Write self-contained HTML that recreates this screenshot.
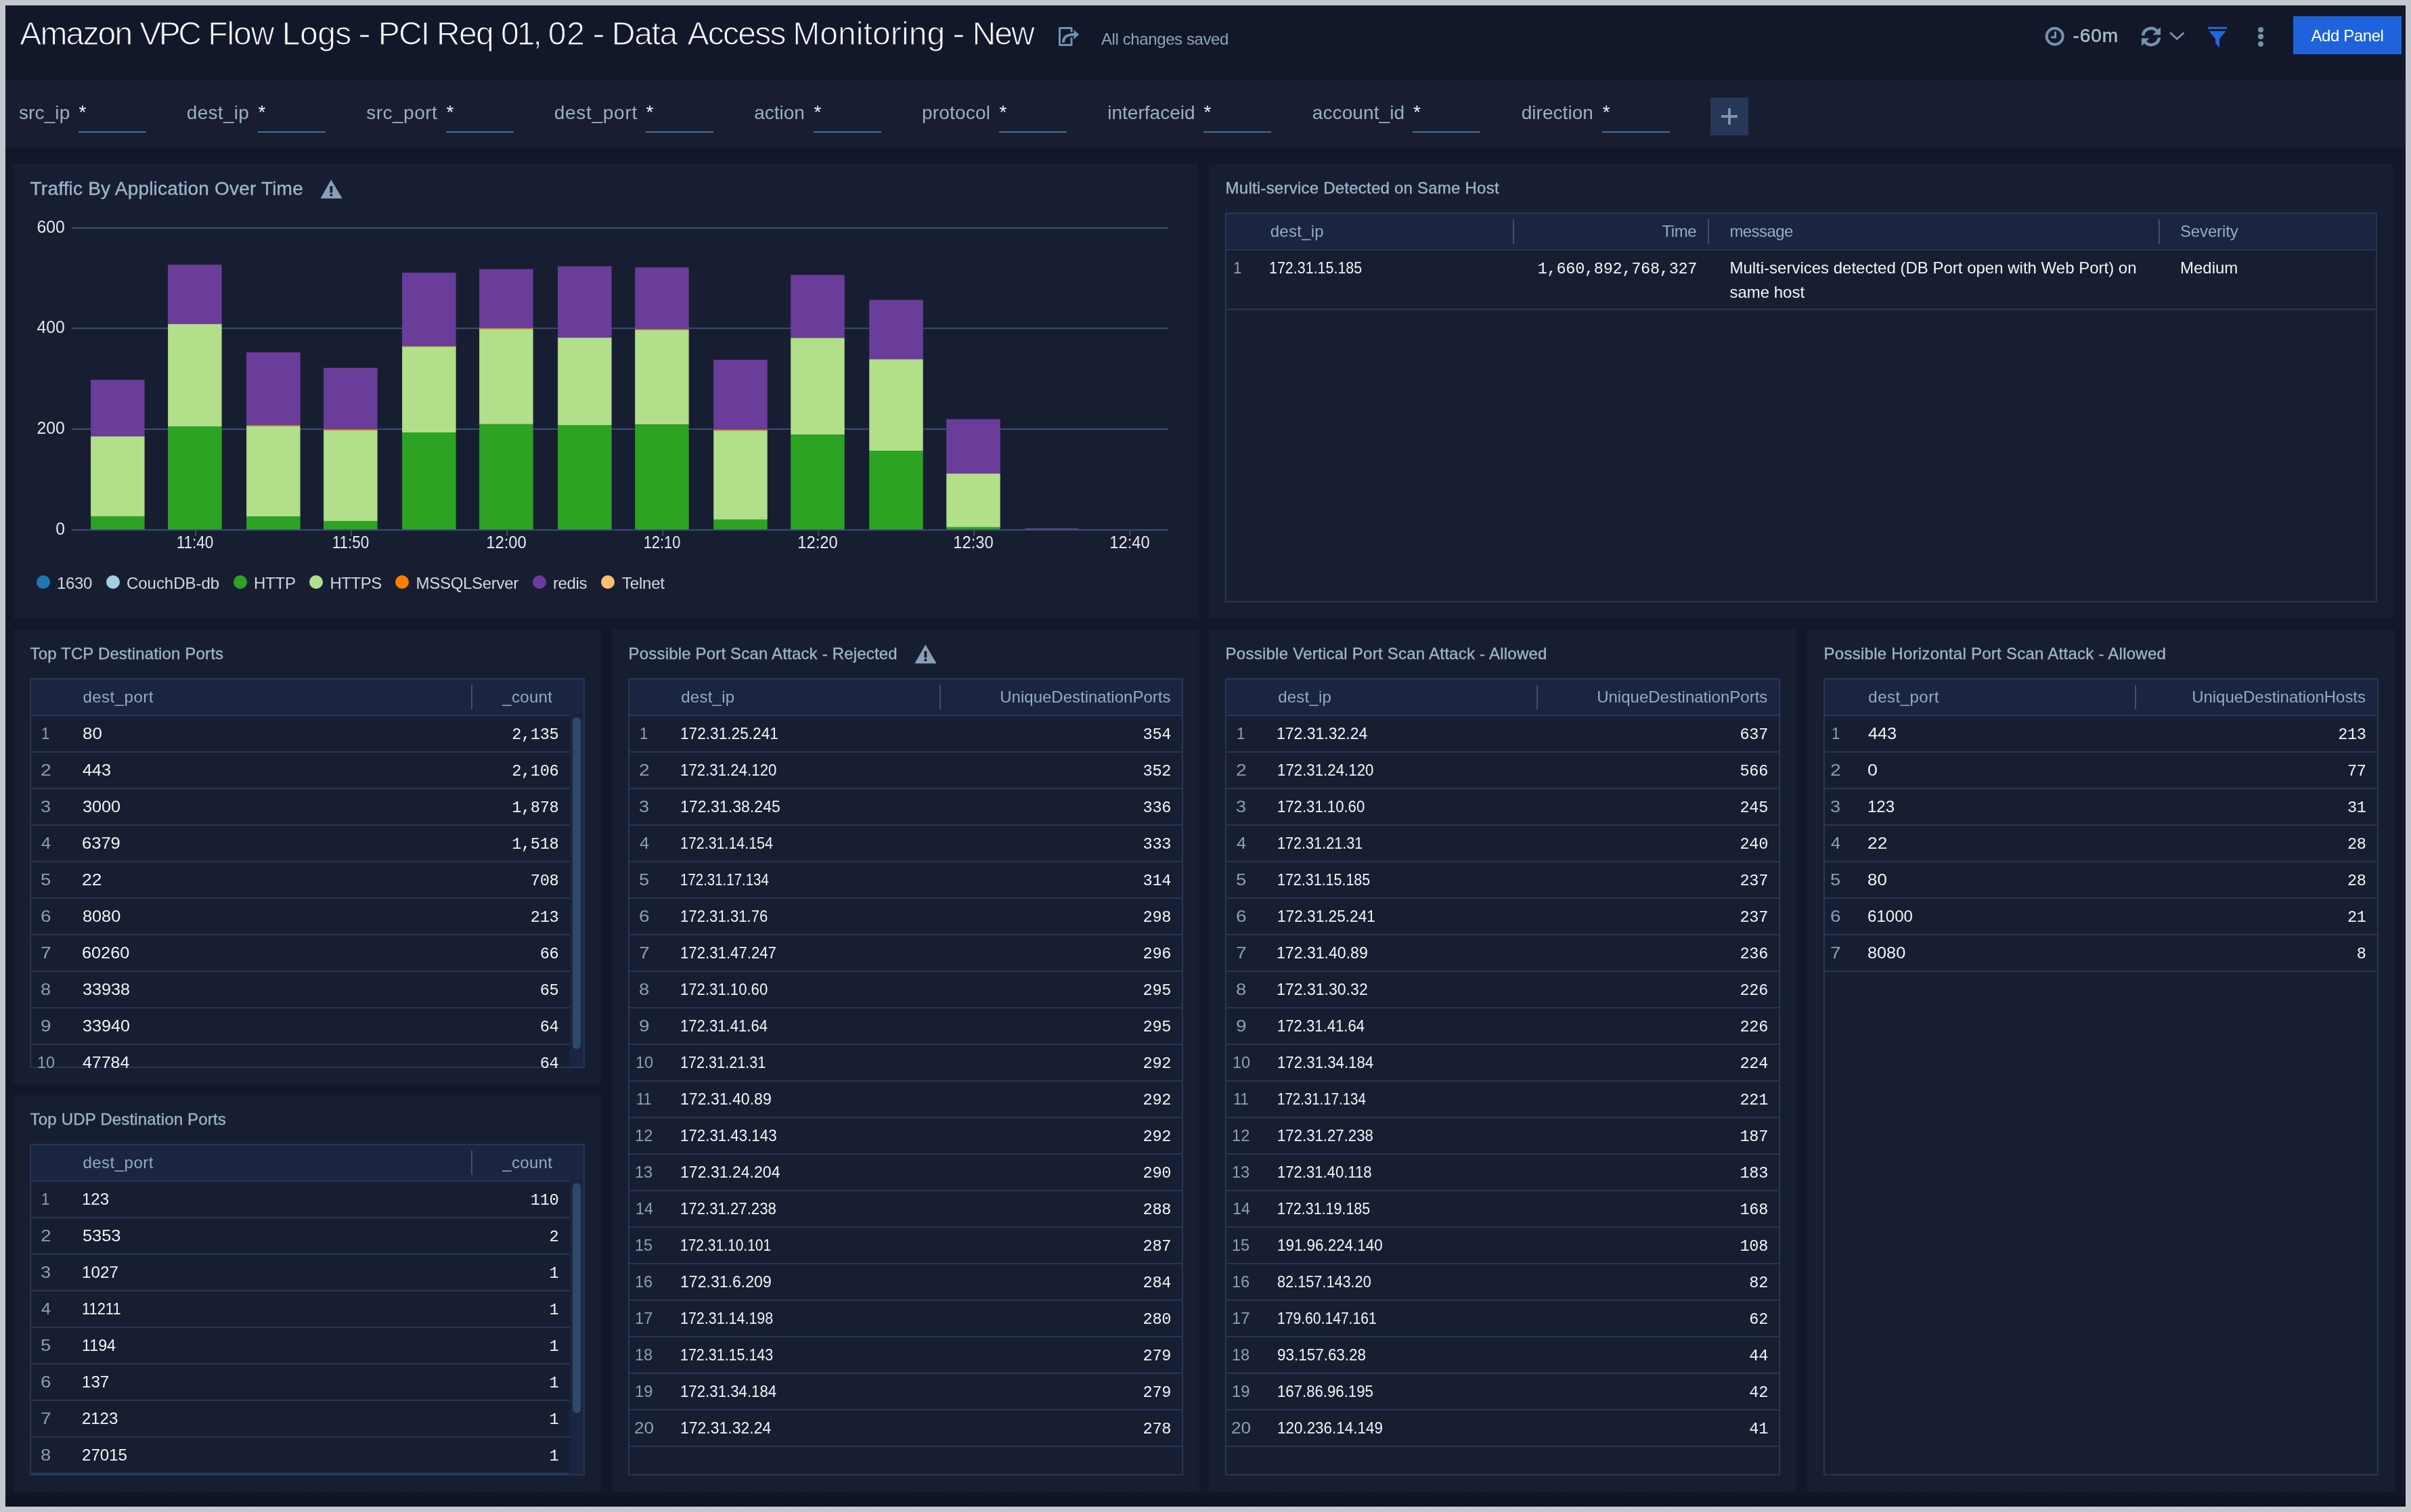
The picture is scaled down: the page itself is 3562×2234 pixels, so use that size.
<!DOCTYPE html>
<html lang="en"><head><meta charset="utf-8">
<title>Amazon VPC Flow Logs - PCI Req 01, 02 - Data Access Monitoring - New</title>
<style>
html,body{margin:0;padding:0;}
body{width:3562px;height:2234px;background:#c4c8cc;overflow:hidden;font-family:"Liberation Sans",Arial,Helvetica,sans-serif;}
#page{position:relative;width:3562px;height:2234px;overflow:hidden;will-change:transform;}
#app{position:absolute;left:8px;top:8px;width:3546px;height:2217.5px;background:#121829;}
.b{position:absolute;}
.t{position:absolute;white-space:nowrap;font-family:"Liberation Sans",Arial,Helvetica,sans-serif;}
.m{font-family:"Liberation Mono","DejaVu Sans Mono",monospace;}
svg{position:absolute;overflow:visible;}
.tbl{position:absolute;box-sizing:border-box;border:2px solid #243759;overflow:hidden;}
</style></head><body><div id="page"><div id="app"></div>

<h1 class="t" style="left:0;top:0;margin:0;font-weight:400;font-size:48px;line-height:48px;color:#f7f9fb;-webkit-text-stroke:1.1px #121829;">
<span style="position:absolute;left:29.20px;top:25.67px;letter-spacing:-1.828px;white-space:pre;">Amazon </span>
<span style="position:absolute;left:206.16px;top:25.67px;letter-spacing:-3.460px;white-space:pre;">VPC </span>
<span style="position:absolute;left:307.36px;top:25.67px;letter-spacing:-1.127px;white-space:pre;">Flow </span>
<span style="position:absolute;left:416.86px;top:25.67px;letter-spacing:-0.547px;white-space:pre;">Logs </span>
<span style="position:absolute;left:529.33px;top:25.67px;transform:scaleX(1.190);transform-origin:left center;white-space:pre;">- </span>
<span style="position:absolute;left:558.66px;top:25.67px;letter-spacing:-1.780px;white-space:pre;">PCI </span>
<span style="position:absolute;left:644.96px;top:25.67px;letter-spacing:-1.680px;white-space:pre;">Req </span>
<span style="position:absolute;left:740.02px;top:25.67px;letter-spacing:-2.960px;white-space:pre;">01, </span>
<span style="position:absolute;left:809.85px;top:25.67px;letter-spacing:0.800px;white-space:pre;">02 </span>
<span style="position:absolute;left:874.63px;top:25.67px;transform:scaleX(1.190);transform-origin:left center;white-space:pre;">- </span>
<span style="position:absolute;left:903.86px;top:25.67px;letter-spacing:-1.327px;white-space:pre;">Data </span>
<span style="position:absolute;left:1015.50px;top:25.67px;letter-spacing:-1.724px;white-space:pre;">Access </span>
<span style="position:absolute;left:1171.16px;top:25.67px;letter-spacing:0.096px;white-space:pre;">Monitoring </span>
<span style="position:absolute;left:1407.35px;top:25.67px;transform:scaleX(1.182);transform-origin:left center;white-space:pre;">- </span>
<span style="position:absolute;left:1436.56px;top:25.67px;letter-spacing:-1.900px;white-space:pre;">New </span>
</h1>
<svg style="left:1562px;top:38px" width="36" height="32" viewBox="0 0 36 32">
<path d="M21 9.5V3.5H3.5V28.5H21V17.5" fill="none" stroke="#6e92b2" stroke-width="3" stroke-linejoin="round"/>
<path d="M9 25C9 16.5 14 13 25 13" fill="none" stroke="#6e92b2" stroke-width="4"/>
<path d="M24.5 6L32.3 13L24.5 20Z" fill="#6e92b2"/></svg>
<div class="t" style="top:45.68px;font-size:24px;line-height:24px;color:#8da4bc;letter-spacing:-0.399px;left:1627.00px;">All changes saved</div>
<svg style="left:3020px;top:38px" width="32" height="32" viewBox="0 0 32 32">
<circle cx="15.7" cy="15.7" r="12" fill="none" stroke="#7592aa" stroke-width="4"/>
<path d="M16.5 8.5V17H10" fill="none" stroke="#7592aa" stroke-width="3"/></svg>
<div class="t" style="top:39.40px;font-size:28px;line-height:28px;color:#a9bccb;letter-spacing:0.902px;left:3062.60px;-webkit-text-stroke:0.5px #a9bccb;">-60m</div>
<svg style="left:3162px;top:38px" width="32" height="32" viewBox="0 0 32 32">
<path d="M4 14.5A12 12 0 0 1 25 8" fill="none" stroke="#7592aa" stroke-width="4.6"/>
<path d="M28 17.5A12 12 0 0 1 7 24" fill="none" stroke="#7592aa" stroke-width="4.6"/>
<path d="M30 2V13.6H18.4Z" fill="#7592aa"/><path d="M2 30V18.4H13.6Z" fill="#7592aa"/></svg>
<svg style="left:3204px;top:45.2px" width="26" height="16" viewBox="0 0 26 16">
<path d="M3 4L12.3 12.5L21.6 4" fill="none" stroke="#7592aa" stroke-width="3" stroke-linecap="round"/></svg>
<svg style="left:3260px;top:38px" width="32" height="34" viewBox="0 0 32 34">
<rect x="2" y="1.8" width="28" height="3" fill="#2166dd"/>
<path d="M3.6 8H28.6L19 19.6V32.2L13 26V19.6Z" fill="#2166dd"/></svg>
<div class="b" style="left:3335.80px;top:40.30px;width:8.00px;height:8.00px;background:#7592aa;border-radius:50%;"></div>
<div class="b" style="left:3335.80px;top:50.40px;width:8.00px;height:8.00px;background:#7592aa;border-radius:50%;"></div>
<div class="b" style="left:3335.80px;top:60.60px;width:8.00px;height:8.00px;background:#7592aa;border-radius:50%;"></div>
<div class="b" style="left:3388.00px;top:24.00px;width:160.00px;height:56.00px;background:#1f63dc;"></div>
<div class="t" style="top:40.68px;font-size:24px;line-height:24px;color:#ffffff;letter-spacing:-0.417px;left:3414.50px;">Add Panel</div>
<div class="b" style="left:8.00px;top:118.00px;width:3546.00px;height:100.00px;background:#181d31;"></div>
<div class="t" style="top:153.30px;font-size:28px;line-height:28px;color:#98afc8;letter-spacing:0.118px;left:28.00px;">src_ip</div>
<div class="t" style="top:151.70px;font-size:28px;line-height:28px;color:#eef2f6;left:116.60px;">*</div>
<div class="b" style="left:116.10px;top:194.00px;width:100.00px;height:2.00px;background:#41729c;"></div>
<div class="t" style="top:153.30px;font-size:28px;line-height:28px;color:#98afc8;letter-spacing:0.301px;left:275.80px;">dest_ip</div>
<div class="t" style="top:151.70px;font-size:28px;line-height:28px;color:#eef2f6;left:381.40px;">*</div>
<div class="b" style="left:380.90px;top:194.00px;width:100.00px;height:2.00px;background:#41729c;"></div>
<div class="t" style="top:153.30px;font-size:28px;line-height:28px;color:#98afc8;letter-spacing:0.494px;left:541.20px;">src_port</div>
<div class="t" style="top:151.70px;font-size:28px;line-height:28px;color:#eef2f6;left:659.60px;">*</div>
<div class="b" style="left:659.10px;top:194.00px;width:100.00px;height:2.00px;background:#41729c;"></div>
<div class="t" style="top:153.30px;font-size:28px;line-height:28px;color:#98afc8;letter-spacing:0.706px;left:818.80px;">dest_port</div>
<div class="t" style="top:151.70px;font-size:28px;line-height:28px;color:#eef2f6;left:954.60px;">*</div>
<div class="b" style="left:954.10px;top:194.00px;width:100.00px;height:2.00px;background:#41729c;"></div>
<div class="t" style="top:153.30px;font-size:28px;line-height:28px;color:#98afc8;letter-spacing:-0.053px;left:1114.30px;">action</div>
<div class="t" style="top:151.70px;font-size:28px;line-height:28px;color:#eef2f6;left:1202.50px;">*</div>
<div class="b" style="left:1202.00px;top:194.00px;width:100.00px;height:2.00px;background:#41729c;"></div>
<div class="t" style="top:153.30px;font-size:28px;line-height:28px;color:#98afc8;letter-spacing:0.186px;left:1362.10px;">protocol</div>
<div class="t" style="top:151.70px;font-size:28px;line-height:28px;color:#eef2f6;left:1476.40px;">*</div>
<div class="b" style="left:1475.90px;top:194.00px;width:100.00px;height:2.00px;background:#41729c;"></div>
<div class="t" style="top:153.30px;font-size:28px;line-height:28px;color:#98afc8;letter-spacing:0.029px;left:1636.20px;">interfaceid</div>
<div class="t" style="top:151.70px;font-size:28px;line-height:28px;color:#eef2f6;left:1778.40px;">*</div>
<div class="b" style="left:1777.90px;top:194.00px;width:100.00px;height:2.00px;background:#41729c;"></div>
<div class="t" style="top:153.30px;font-size:28px;line-height:28px;color:#98afc8;letter-spacing:0.097px;left:1938.80px;">account_id</div>
<div class="t" style="top:151.70px;font-size:28px;line-height:28px;color:#eef2f6;left:2087.90px;">*</div>
<div class="b" style="left:2087.40px;top:194.00px;width:100.00px;height:2.00px;background:#41729c;"></div>
<div class="t" style="top:153.30px;font-size:28px;line-height:28px;color:#98afc8;letter-spacing:0.041px;left:2247.70px;">direction</div>
<div class="t" style="top:151.70px;font-size:28px;line-height:28px;color:#eef2f6;left:2367.80px;">*</div>
<div class="b" style="left:2367.30px;top:194.00px;width:100.00px;height:2.00px;background:#41729c;"></div>
<div class="b" style="left:2527.00px;top:144.00px;width:56.00px;height:56.00px;background:#263758;"></div>
<div class="b" style="left:2543.00px;top:170.00px;width:24.00px;height:4.00px;background:#7894b0;"></div>
<div class="b" style="left:2553.00px;top:160.00px;width:4.00px;height:24.00px;background:#7894b0;"></div>
<div class="b" style="left:20.00px;top:242.00px;width:1750.00px;height:672.00px;background:#181e31;"></div>
<div class="t" style="top:264.90px;font-size:28px;line-height:28px;color:#9db4cd;letter-spacing:0.203px;left:44.60px;-webkit-text-stroke:0.35px #9db4cd;">Traffic By Application Over Time</div>
<svg style="left:472.6px;top:265.0px" width="34" height="30" viewBox="0 0 34 30">
<path d="M16.3 0.5L32.6 28.2H0.4Z" fill="#8a9eb8"/>
<rect x="14.4" y="10" width="3.9" height="9.6" fill="#181e31"/><rect x="14.4" y="21.2" width="3.9" height="3.8" rx="1.6" fill="#181e31"/></svg>
<svg style="left:0;top:0" width="3562" height="2234" viewBox="0 0 3562 2234">
<rect x="106" y="336" width="1620" height="2" fill="#364e73"/>
<rect x="106" y="484" width="1620" height="2" fill="#364e73"/>
<rect x="106" y="633" width="1620" height="2" fill="#364e73"/>
<rect x="134.1" y="561.2" width="79.5" height="83.60" fill="#6a3d9a"/>
<rect x="134.1" y="644.8" width="79.5" height="118.10" fill="#b2df8a"/>
<rect x="134.1" y="762.9" width="79.5" height="19.10" fill="#2da323"/>
<rect x="248.1" y="391.0" width="79.5" height="87.80" fill="#6a3d9a"/>
<rect x="248.1" y="478.8" width="79.5" height="151.30" fill="#b2df8a"/>
<rect x="248.1" y="630.1" width="79.5" height="151.90" fill="#2da323"/>
<rect x="364.1" y="520.6" width="79.5" height="107.70" fill="#6a3d9a"/>
<rect x="364.1" y="628.3" width="79.5" height="1.00" fill="#ff7f00"/>
<rect x="364.1" y="629.3" width="79.5" height="134.00" fill="#b2df8a"/>
<rect x="364.1" y="763.3" width="79.5" height="18.70" fill="#2da323"/>
<rect x="478.1" y="543.6" width="79.5" height="90.60" fill="#6a3d9a"/>
<rect x="478.1" y="634.2" width="79.5" height="1.60" fill="#ff7f00"/>
<rect x="478.1" y="635.8" width="79.5" height="134.10" fill="#b2df8a"/>
<rect x="478.1" y="769.9" width="79.5" height="12.10" fill="#2da323"/>
<rect x="594.1" y="402.9" width="79.5" height="108.50" fill="#6a3d9a"/>
<rect x="594.1" y="511.4" width="79.5" height="0.80" fill="#ff7f00"/>
<rect x="594.1" y="512.2" width="79.5" height="126.90" fill="#b2df8a"/>
<rect x="594.1" y="639.1" width="79.5" height="142.90" fill="#2da323"/>
<rect x="708.1" y="397.6" width="79.5" height="87.30" fill="#6a3d9a"/>
<rect x="708.1" y="484.9" width="79.5" height="1.30" fill="#ff7f00"/>
<rect x="708.1" y="486.2" width="79.5" height="140.60" fill="#b2df8a"/>
<rect x="708.1" y="626.8" width="79.5" height="155.20" fill="#2da323"/>
<rect x="824.1" y="393.5" width="79.5" height="105.40" fill="#6a3d9a"/>
<rect x="824.1" y="498.9" width="79.5" height="129.10" fill="#b2df8a"/>
<rect x="824.1" y="628.0" width="79.5" height="154.00" fill="#2da323"/>
<rect x="938.2" y="395.1" width="79.5" height="91.30" fill="#6a3d9a"/>
<rect x="938.2" y="486.4" width="79.5" height="0.80" fill="#ff7f00"/>
<rect x="938.2" y="487.2" width="79.5" height="140.00" fill="#b2df8a"/>
<rect x="938.2" y="627.2" width="79.5" height="154.80" fill="#2da323"/>
<rect x="1054.2" y="531.6" width="79.5" height="103.20" fill="#6a3d9a"/>
<rect x="1054.2" y="634.8" width="79.5" height="1.40" fill="#ff7f00"/>
<rect x="1054.2" y="636.2" width="79.5" height="131.60" fill="#b2df8a"/>
<rect x="1054.2" y="767.8" width="79.5" height="14.20" fill="#2da323"/>
<rect x="1168.2" y="406.2" width="79.5" height="93.10" fill="#6a3d9a"/>
<rect x="1168.2" y="499.3" width="79.5" height="143.00" fill="#b2df8a"/>
<rect x="1168.2" y="642.3" width="79.5" height="139.70" fill="#2da323"/>
<rect x="1284.2" y="443.1" width="79.5" height="87.70" fill="#6a3d9a"/>
<rect x="1284.2" y="530.8" width="79.5" height="135.30" fill="#b2df8a"/>
<rect x="1284.2" y="666.1" width="79.5" height="115.90" fill="#2da323"/>
<rect x="1398.2" y="619.4" width="79.5" height="80.30" fill="#6a3d9a"/>
<rect x="1398.2" y="699.7" width="79.5" height="79.20" fill="#b2df8a"/>
<rect x="1398.2" y="778.9" width="79.5" height="3.10" fill="#2da323"/>
<rect x="1514.2" y="780.6" width="79.5" height="1.40" fill="#6a3d9a"/>
<rect x="106" y="782" width="1620" height="2" fill="#364e73"/>
<rect x="288.0" y="784" width="2" height="8" fill="#364e73"/>
<rect x="518.0" y="784" width="2" height="8" fill="#364e73"/>
<rect x="748.1" y="784" width="2" height="8" fill="#364e73"/>
<rect x="978.2" y="784" width="2" height="8" fill="#364e73"/>
<rect x="1208.2" y="784" width="2" height="8" fill="#364e73"/>
<rect x="1438.2" y="784" width="2" height="8" fill="#364e73"/>
<rect x="1668.3" y="784" width="2" height="8" fill="#364e73"/>
</svg>
<div class="t" style="top:322.84px;font-size:25px;line-height:25px;color:#e3e8ee;transform:scaleX(0.9889);transform-origin:right center;right:3466.60px;text-align:right;">600</div>
<div class="t" style="top:470.84px;font-size:25px;line-height:25px;color:#e3e8ee;transform:scaleX(0.9889);transform-origin:right center;right:3466.60px;text-align:right;">400</div>
<div class="t" style="top:619.84px;font-size:25px;line-height:25px;color:#e3e8ee;transform:scaleX(0.9889);transform-origin:right center;right:3466.60px;text-align:right;">200</div>
<div class="t" style="top:768.84px;font-size:25px;line-height:25px;color:#e3e8ee;transform:scaleX(0.9889);transform-origin:right center;right:3466.60px;text-align:right;">0</div>
<div class="t" style="top:789.34px;font-size:25px;line-height:25px;color:#e3e8ee;transform:scaleX(0.9011);transform-origin:center center;left:-211.80px;width:1000px;text-align:center;">11:40</div>
<div class="t" style="top:789.34px;font-size:25px;line-height:25px;color:#e3e8ee;transform:scaleX(0.9011);transform-origin:center center;left:18.25px;width:1000px;text-align:center;">11:50</div>
<div class="t" style="top:789.34px;font-size:25px;line-height:25px;color:#e3e8ee;transform:scaleX(0.9479);transform-origin:center center;left:248.30px;width:1000px;text-align:center;">12:00</div>
<div class="t" style="top:789.34px;font-size:25px;line-height:25px;color:#e3e8ee;transform:scaleX(0.8743);transform-origin:center center;left:478.35px;width:1000px;text-align:center;">12:10</div>
<div class="t" style="top:789.34px;font-size:25px;line-height:25px;color:#e3e8ee;transform:scaleX(0.9479);transform-origin:center center;left:708.40px;width:1000px;text-align:center;">12:20</div>
<div class="t" style="top:789.34px;font-size:25px;line-height:25px;color:#e3e8ee;transform:scaleX(0.9479);transform-origin:center center;left:938.45px;width:1000px;text-align:center;">12:30</div>
<div class="t" style="top:789.34px;font-size:25px;line-height:25px;color:#e3e8ee;transform:scaleX(0.9479);transform-origin:center center;left:1168.50px;width:1000px;text-align:center;">12:40</div>
<div class="b" style="left:54.00px;top:850.00px;width:20.00px;height:20.00px;background:#1f78b4;border-radius:50%;"></div>
<div class="t" style="top:850.38px;font-size:24px;line-height:24px;color:#d0d8e0;letter-spacing:-0.348px;left:84.00px;">1630</div>
<div class="b" style="left:156.90px;top:850.00px;width:20.00px;height:20.00px;background:#a6cee3;border-radius:50%;"></div>
<div class="t" style="top:850.38px;font-size:24px;line-height:24px;color:#d0d8e0;letter-spacing:-0.040px;left:187.00px;">CouchDB-db</div>
<div class="b" style="left:345.00px;top:850.00px;width:20.00px;height:20.00px;background:#2da323;border-radius:50%;"></div>
<div class="t" style="top:850.38px;font-size:24px;line-height:24px;color:#d0d8e0;letter-spacing:-0.240px;left:375.00px;">HTTP</div>
<div class="b" style="left:457.40px;top:850.00px;width:20.00px;height:20.00px;background:#b2df8a;border-radius:50%;"></div>
<div class="t" style="top:850.38px;font-size:24px;line-height:24px;color:#d0d8e0;letter-spacing:-0.474px;left:487.50px;">HTTPS</div>
<div class="b" style="left:584.00px;top:850.00px;width:20.00px;height:20.00px;background:#ff7f00;border-radius:50%;"></div>
<div class="t" style="top:850.38px;font-size:24px;line-height:24px;color:#d0d8e0;letter-spacing:-0.301px;left:614.60px;">MSSQLServer</div>
<div class="b" style="left:787.00px;top:850.00px;width:20.00px;height:20.00px;background:#6a3d9a;border-radius:50%;"></div>
<div class="t" style="top:850.38px;font-size:24px;line-height:24px;color:#d0d8e0;letter-spacing:-0.404px;left:817.00px;">redis</div>
<div class="b" style="left:888.00px;top:850.00px;width:20.00px;height:20.00px;background:#fdbf6f;border-radius:50%;"></div>
<div class="t" style="top:850.38px;font-size:24px;line-height:24px;color:#d0d8e0;letter-spacing:-0.224px;left:919.00px;">Telnet</div>
<div class="b" style="left:1786.00px;top:242.00px;width:1750.00px;height:672.00px;background:#181e31;"></div>
<div class="t" style="top:266.18px;font-size:24px;line-height:24px;color:#9db4cd;letter-spacing:0.230px;left:1810.60px;-webkit-text-stroke:0.35px #9db4cd;">Multi-service Detected on Same Host</div>
<div class="tbl" style="left:1810.00px;top:314.00px;width:1702.00px;height:576.00px;"></div>
<div class="b" style="left:1812.00px;top:316.00px;width:1698.00px;height:52.00px;background:#1b2540;"></div>
<div class="b" style="left:1812.00px;top:368.00px;width:1698.00px;height:2.00px;background:#243759;"></div>
<div class="b" style="left:2234.90px;top:323.50px;width:2.00px;height:36.00px;background:#3a5273;"></div>
<div class="b" style="left:2523.00px;top:323.50px;width:2.00px;height:36.00px;background:#3a5273;"></div>
<div class="b" style="left:3189.00px;top:323.50px;width:2.00px;height:36.00px;background:#3a5273;"></div>
<div class="t" style="top:329.88px;font-size:24px;line-height:24px;color:#92abc6;letter-spacing:0.230px;left:1876.80px;">dest_ip</div>
<div class="t" style="top:329.88px;font-size:24px;line-height:24px;color:#92abc6;letter-spacing:-0.510px;right:1056.01px;text-align:right;">Time</div>
<div class="t" style="top:329.88px;font-size:24px;line-height:24px;color:#92abc6;letter-spacing:-0.583px;left:2555.40px;">message</div>
<div class="t" style="top:329.88px;font-size:24px;line-height:24px;color:#92abc6;letter-spacing:-0.149px;left:3221.00px;">Severity</div>
<div class="b" style="left:1812.00px;top:456.00px;width:1698.00px;height:2.00px;background:#243759;"></div>
<div class="t" style="left:1821.62px;top:383.56px;font-size:24.5px;line-height:24.5px;color:#8aa0ba;transform:scaleX(0.9064);transform-origin:left center;">1</div>
<div class="t" style="left:1875.19px;top:383.56px;font-size:24.5px;line-height:24.5px;color:#f1f4f7;transform:scaleX(0.8758);transform-origin:left center;">172.31.15.185</div>
<div class="t m" style="top:386.21px;font-size:23.6px;line-height:23.6px;color:#f1f4f7;letter-spacing:-0.310px;right:1054.81px;text-align:right;">1,660,892,768,327</div>
<div class="t" style="top:383.68px;font-size:24px;line-height:24px;color:#f1f4f7;left:2555.40px;">Multi-services detected (DB Port open with Web Port) on</div>
<div class="t" style="top:419.68px;font-size:24px;line-height:24px;color:#f1f4f7;left:2555.40px;">same host</div>
<div class="t" style="top:383.68px;font-size:24px;line-height:24px;color:#f1f4f7;left:3221.00px;">Medium</div>
<div class="b" style="left:20.00px;top:930.00px;width:868.00px;height:672.00px;background:#181e31;"></div>
<div class="t" style="top:954.18px;font-size:24px;line-height:24px;color:#9db4cd;letter-spacing:0.143px;left:44.60px;-webkit-text-stroke:0.35px #9db4cd;">Top TCP Destination Ports</div>
<div class="b" style="left:0;top:0;width:3562px;height:2234px;clip-path:inset(1002.00px 2698.00px 656.00px 44.00px);">
<div class="tbl" style="left:44.00px;top:1002.00px;width:820.00px;height:576.00px;"></div>
<div class="b" style="left:46.00px;top:1004.00px;width:816.00px;height:52.00px;background:#1b2540;"></div>
<div class="b" style="left:46.00px;top:1056.00px;width:796.30px;height:2.00px;background:#243759;"></div>
<div class="b" style="left:842.30px;top:1058.00px;width:19.70px;height:518.00px;background:#1b2540;"></div>
<div class="b" style="left:695.90px;top:1011.50px;width:2.00px;height:36.00px;background:#3a5273;"></div>
<div class="t" style="top:1017.88px;font-size:24px;line-height:24px;color:#92abc6;letter-spacing:0.493px;left:122.40px;">dest_port</div>
<div class="t" style="top:1017.88px;font-size:24px;line-height:24px;color:#92abc6;letter-spacing:0.324px;right:2745.78px;text-align:right;">_count</div>
<div class="b" style="left:46.00px;top:1110.00px;width:796.30px;height:2.00px;background:#243759;"></div>
<div class="t" style="left:61.42px;top:1071.56px;font-size:24.5px;line-height:24.5px;color:#8aa0ba;transform:scaleX(0.9064);transform-origin:left center;">1</div>
<div class="t" style="left:121.57px;top:1071.56px;font-size:24.5px;line-height:24.5px;color:#f1f4f7;transform:scaleX(1.0557);transform-origin:left center;">80</div>
<div class="t m" style="top:1074.21px;font-size:23.6px;line-height:23.6px;color:#f1f4f7;letter-spacing:-0.310px;right:2736.61px;text-align:right;">2,135</div>
<div class="b" style="left:46.00px;top:1164.00px;width:796.30px;height:2.00px;background:#243759;"></div>
<div class="t" style="left:59.75px;top:1125.56px;font-size:24.5px;line-height:24.5px;color:#8aa0ba;transform:scaleX(1.1517);transform-origin:left center;">2</div>
<div class="t" style="left:122.09px;top:1125.56px;font-size:24.5px;line-height:24.5px;color:#f1f4f7;transform:scaleX(1.0315);transform-origin:left center;">443</div>
<div class="t m" style="top:1128.21px;font-size:23.6px;line-height:23.6px;color:#f1f4f7;letter-spacing:-0.310px;right:2736.61px;text-align:right;">2,106</div>
<div class="b" style="left:46.00px;top:1218.00px;width:796.30px;height:2.00px;background:#243759;"></div>
<div class="t" style="left:60.08px;top:1179.56px;font-size:24.5px;line-height:24.5px;color:#8aa0ba;transform:scaleX(1.1037);transform-origin:left center;">3</div>
<div class="t" style="left:121.72px;top:1179.56px;font-size:24.5px;line-height:24.5px;color:#f1f4f7;transform:scaleX(1.0294);transform-origin:left center;">3000</div>
<div class="t m" style="top:1182.21px;font-size:23.6px;line-height:23.6px;color:#f1f4f7;letter-spacing:-0.310px;right:2736.61px;text-align:right;">1,878</div>
<div class="b" style="left:46.00px;top:1272.00px;width:796.30px;height:2.00px;background:#243759;"></div>
<div class="t" style="left:60.52px;top:1233.56px;font-size:24.5px;line-height:24.5px;color:#8aa0ba;transform:scaleX(1.0388);transform-origin:left center;">4</div>
<div class="t" style="left:121.32px;top:1233.56px;font-size:24.5px;line-height:24.5px;color:#f1f4f7;transform:scaleX(1.0415);transform-origin:left center;">6379</div>
<div class="t m" style="top:1236.21px;font-size:23.6px;line-height:23.6px;color:#f1f4f7;letter-spacing:-0.310px;right:2736.61px;text-align:right;">1,518</div>
<div class="b" style="left:46.00px;top:1326.00px;width:796.30px;height:2.00px;background:#243759;"></div>
<div class="t" style="left:60.00px;top:1287.56px;font-size:24.5px;line-height:24.5px;color:#8aa0ba;transform:scaleX(1.1154);transform-origin:left center;">5</div>
<div class="t" style="left:121.28px;top:1287.56px;font-size:24.5px;line-height:24.5px;color:#f1f4f7;transform:scaleX(1.0765);transform-origin:left center;">22</div>
<div class="t m" style="top:1290.21px;font-size:23.6px;line-height:23.6px;color:#f1f4f7;letter-spacing:-0.310px;right:2736.61px;text-align:right;">708</div>
<div class="b" style="left:46.00px;top:1380.00px;width:796.30px;height:2.00px;background:#243759;"></div>
<div class="t" style="left:59.84px;top:1341.56px;font-size:24.5px;line-height:24.5px;color:#8aa0ba;transform:scaleX(1.1393);transform-origin:left center;">6</div>
<div class="t" style="left:121.59px;top:1341.56px;font-size:24.5px;line-height:24.5px;color:#f1f4f7;transform:scaleX(1.0318);transform-origin:left center;">8080</div>
<div class="t m" style="top:1344.21px;font-size:23.6px;line-height:23.6px;color:#f1f4f7;letter-spacing:-0.310px;right:2736.61px;text-align:right;">213</div>
<div class="b" style="left:46.00px;top:1434.00px;width:796.30px;height:2.00px;background:#243759;"></div>
<div class="t" style="left:59.75px;top:1395.56px;font-size:24.5px;line-height:24.5px;color:#8aa0ba;transform:scaleX(1.1517);transform-origin:left center;">7</div>
<div class="t" style="left:121.34px;top:1395.56px;font-size:24.5px;line-height:24.5px;color:#f1f4f7;transform:scaleX(1.0320);transform-origin:left center;">60260</div>
<div class="t m" style="top:1398.21px;font-size:23.6px;line-height:23.6px;color:#f1f4f7;letter-spacing:-0.310px;right:2736.61px;text-align:right;">66</div>
<div class="b" style="left:46.00px;top:1488.00px;width:796.30px;height:2.00px;background:#243759;"></div>
<div class="t" style="left:60.00px;top:1449.56px;font-size:24.5px;line-height:24.5px;color:#8aa0ba;transform:scaleX(1.1154);transform-origin:left center;">8</div>
<div class="t" style="left:121.72px;top:1449.56px;font-size:24.5px;line-height:24.5px;color:#f1f4f7;transform:scaleX(1.0282);transform-origin:left center;">33938</div>
<div class="t m" style="top:1452.21px;font-size:23.6px;line-height:23.6px;color:#f1f4f7;letter-spacing:-0.310px;right:2736.61px;text-align:right;">65</div>
<div class="b" style="left:46.00px;top:1542.00px;width:796.30px;height:2.00px;background:#243759;"></div>
<div class="t" style="left:59.84px;top:1503.56px;font-size:24.5px;line-height:24.5px;color:#8aa0ba;transform:scaleX(1.1393);transform-origin:left center;">9</div>
<div class="t" style="left:121.72px;top:1503.56px;font-size:24.5px;line-height:24.5px;color:#f1f4f7;transform:scaleX(1.0263);transform-origin:left center;">33940</div>
<div class="t m" style="top:1506.21px;font-size:23.6px;line-height:23.6px;color:#f1f4f7;letter-spacing:-0.310px;right:2736.61px;text-align:right;">64</div>
<div class="b" style="left:46.00px;top:1596.00px;width:796.30px;height:2.00px;background:#243759;"></div>
<div class="t" style="left:54.56px;top:1557.56px;font-size:24.5px;line-height:24.5px;color:#8aa0ba;transform:scaleX(0.9571);transform-origin:left center;">10</div>
<div class="t" style="left:122.10px;top:1557.56px;font-size:24.5px;line-height:24.5px;color:#f1f4f7;transform:scaleX(1.0169);transform-origin:left center;">47784</div>
<div class="t m" style="top:1560.21px;font-size:23.6px;line-height:23.6px;color:#f1f4f7;letter-spacing:-0.310px;right:2736.61px;text-align:right;">64</div>
<div class="b" style="left:846.40px;top:1060.00px;width:11.20px;height:490.40px;background:#2d4a6b;border-radius:6px;"></div>
</div>
<div class="b" style="left:20.00px;top:1618.00px;width:868.00px;height:586.00px;background:#181e31;"></div>
<div class="t" style="top:1642.18px;font-size:24px;line-height:24px;color:#9db4cd;letter-spacing:0.171px;left:44.60px;-webkit-text-stroke:0.35px #9db4cd;">Top UDP Destination Ports</div>
<div class="b" style="left:0;top:0;width:3562px;height:2234px;clip-path:inset(1690.00px 2698.00px 54.00px 44.00px);">
<div class="tbl" style="left:44.00px;top:1690.00px;width:820.00px;height:490.00px;"></div>
<div class="b" style="left:46.00px;top:1692.00px;width:816.00px;height:52.00px;background:#1b2540;"></div>
<div class="b" style="left:46.00px;top:1744.00px;width:796.30px;height:2.00px;background:#243759;"></div>
<div class="b" style="left:842.30px;top:1746.00px;width:19.70px;height:432.00px;background:#1b2540;"></div>
<div class="b" style="left:695.90px;top:1699.50px;width:2.00px;height:36.00px;background:#3a5273;"></div>
<div class="t" style="top:1705.88px;font-size:24px;line-height:24px;color:#92abc6;letter-spacing:0.493px;left:122.40px;">dest_port</div>
<div class="t" style="top:1705.88px;font-size:24px;line-height:24px;color:#92abc6;letter-spacing:0.324px;right:2745.78px;text-align:right;">_count</div>
<div class="b" style="left:46.00px;top:1798.00px;width:796.30px;height:2.00px;background:#243759;"></div>
<div class="t" style="left:61.42px;top:1759.56px;font-size:24.5px;line-height:24.5px;color:#8aa0ba;transform:scaleX(0.9064);transform-origin:left center;">1</div>
<div class="t" style="left:120.80px;top:1759.56px;font-size:24.5px;line-height:24.5px;color:#f1f4f7;transform:scaleX(0.9806);transform-origin:left center;">123</div>
<div class="t m" style="top:1762.21px;font-size:23.6px;line-height:23.6px;color:#f1f4f7;letter-spacing:-0.310px;right:2736.61px;text-align:right;">110</div>
<div class="b" style="left:46.00px;top:1852.00px;width:796.30px;height:2.00px;background:#243759;"></div>
<div class="t" style="left:59.75px;top:1813.56px;font-size:24.5px;line-height:24.5px;color:#8aa0ba;transform:scaleX(1.1517);transform-origin:left center;">2</div>
<div class="t" style="left:121.59px;top:1813.56px;font-size:24.5px;line-height:24.5px;color:#f1f4f7;transform:scaleX(1.0342);transform-origin:left center;">5353</div>
<div class="t m" style="top:1816.21px;font-size:23.6px;line-height:23.6px;color:#f1f4f7;letter-spacing:-0.310px;right:2736.61px;text-align:right;">2</div>
<div class="b" style="left:46.00px;top:1906.00px;width:796.30px;height:2.00px;background:#243759;"></div>
<div class="t" style="left:60.08px;top:1867.56px;font-size:24.5px;line-height:24.5px;color:#8aa0ba;transform:scaleX(1.1037);transform-origin:left center;">3</div>
<div class="t" style="left:120.78px;top:1867.56px;font-size:24.5px;line-height:24.5px;color:#f1f4f7;transform:scaleX(0.9895);transform-origin:left center;">1027</div>
<div class="t m" style="top:1870.21px;font-size:23.6px;line-height:23.6px;color:#f1f4f7;letter-spacing:-0.310px;right:2736.61px;text-align:right;">1</div>
<div class="b" style="left:46.00px;top:1960.00px;width:796.30px;height:2.00px;background:#243759;"></div>
<div class="t" style="left:60.52px;top:1921.56px;font-size:24.5px;line-height:24.5px;color:#8aa0ba;transform:scaleX(1.0388);transform-origin:left center;">4</div>
<div class="t" style="left:120.96px;top:1921.56px;font-size:24.5px;line-height:24.5px;color:#f1f4f7;transform:scaleX(0.8921);transform-origin:left center;">11211</div>
<div class="t m" style="top:1924.21px;font-size:23.6px;line-height:23.6px;color:#f1f4f7;letter-spacing:-0.310px;right:2736.61px;text-align:right;">1</div>
<div class="b" style="left:46.00px;top:2014.00px;width:796.30px;height:2.00px;background:#243759;"></div>
<div class="t" style="left:60.00px;top:1975.56px;font-size:24.5px;line-height:24.5px;color:#8aa0ba;transform:scaleX(1.1154);transform-origin:left center;">5</div>
<div class="t" style="left:120.85px;top:1975.56px;font-size:24.5px;line-height:24.5px;color:#f1f4f7;transform:scaleX(0.9499);transform-origin:left center;">1194</div>
<div class="t m" style="top:1978.21px;font-size:23.6px;line-height:23.6px;color:#f1f4f7;letter-spacing:-0.310px;right:2736.61px;text-align:right;">1</div>
<div class="b" style="left:46.00px;top:2068.00px;width:796.30px;height:2.00px;background:#243759;"></div>
<div class="t" style="left:59.84px;top:2029.56px;font-size:24.5px;line-height:24.5px;color:#8aa0ba;transform:scaleX(1.1393);transform-origin:left center;">6</div>
<div class="t" style="left:120.79px;top:2029.56px;font-size:24.5px;line-height:24.5px;color:#f1f4f7;transform:scaleX(0.9838);transform-origin:left center;">137</div>
<div class="t m" style="top:2032.21px;font-size:23.6px;line-height:23.6px;color:#f1f4f7;letter-spacing:-0.310px;right:2736.61px;text-align:right;">1</div>
<div class="b" style="left:46.00px;top:2122.00px;width:796.30px;height:2.00px;background:#243759;"></div>
<div class="t" style="left:59.75px;top:2083.56px;font-size:24.5px;line-height:24.5px;color:#8aa0ba;transform:scaleX(1.1517);transform-origin:left center;">7</div>
<div class="t" style="left:121.40px;top:2083.56px;font-size:24.5px;line-height:24.5px;color:#f1f4f7;transform:scaleX(0.9756);transform-origin:left center;">2123</div>
<div class="t m" style="top:2086.21px;font-size:23.6px;line-height:23.6px;color:#f1f4f7;letter-spacing:-0.310px;right:2736.61px;text-align:right;">1</div>
<div class="b" style="left:46.00px;top:2176.00px;width:796.30px;height:2.00px;background:#243759;"></div>
<div class="t" style="left:60.00px;top:2137.56px;font-size:24.5px;line-height:24.5px;color:#8aa0ba;transform:scaleX(1.1154);transform-origin:left center;">8</div>
<div class="t" style="left:121.40px;top:2137.56px;font-size:24.5px;line-height:24.5px;color:#f1f4f7;transform:scaleX(0.9835);transform-origin:left center;">27015</div>
<div class="t m" style="top:2140.21px;font-size:23.6px;line-height:23.6px;color:#f1f4f7;letter-spacing:-0.310px;right:2736.61px;text-align:right;">1</div>
<div class="b" style="left:846.40px;top:1748.20px;width:11.20px;height:339.80px;background:#2d4a6b;border-radius:6px;"></div>
</div>
<div class="b" style="left:904.00px;top:930.00px;width:868.00px;height:1274.00px;background:#181e31;"></div>
<div class="t" style="top:954.18px;font-size:24px;line-height:24px;color:#9db4cd;letter-spacing:0.176px;left:928.60px;-webkit-text-stroke:0.35px #9db4cd;">Possible Port Scan Attack - Rejected</div>
<svg style="left:1351.0px;top:952.2px" width="34" height="30" viewBox="0 0 34 30">
<path d="M16.3 0.5L32.6 28.2H0.4Z" fill="#8a9eb8"/>
<rect x="14.4" y="10" width="3.9" height="9.6" fill="#181e31"/><rect x="14.4" y="21.2" width="3.9" height="3.8" rx="1.6" fill="#181e31"/></svg>
<div class="tbl" style="left:928.00px;top:1002.00px;width:820.00px;height:1178.00px;"></div>
<div class="b" style="left:930.00px;top:1004.00px;width:816.00px;height:52.00px;background:#1b2540;"></div>
<div class="b" style="left:930.00px;top:1056.00px;width:816.00px;height:2.00px;background:#243759;"></div>
<div class="b" style="left:1387.60px;top:1011.50px;width:2.00px;height:36.00px;background:#3a5273;"></div>
<div class="t" style="top:1017.88px;font-size:24px;line-height:24px;color:#92abc6;letter-spacing:0.230px;left:1006.30px;">dest_ip</div>
<div class="t" style="top:1017.88px;font-size:24px;line-height:24px;color:#92abc6;right:1832.60px;text-align:right;">UniqueDestinationPorts</div>
<div class="b" style="left:930.00px;top:1110.00px;width:816.00px;height:2.00px;background:#243759;"></div>
<div class="t" style="left:945.42px;top:1071.56px;font-size:24.5px;line-height:24.5px;color:#8aa0ba;transform:scaleX(0.9064);transform-origin:left center;">1</div>
<div class="t" style="left:1004.60px;top:1071.56px;font-size:24.5px;line-height:24.5px;color:#f1f4f7;transform:scaleX(0.9244);transform-origin:left center;">172.31.25.241</div>
<div class="t m" style="top:1074.21px;font-size:23.6px;line-height:23.6px;color:#f1f4f7;letter-spacing:-0.310px;right:1831.91px;text-align:right;">354</div>
<div class="b" style="left:930.00px;top:1164.00px;width:816.00px;height:2.00px;background:#243759;"></div>
<div class="t" style="left:943.75px;top:1125.56px;font-size:24.5px;line-height:24.5px;color:#8aa0ba;transform:scaleX(1.1517);transform-origin:left center;">2</div>
<div class="t" style="left:1004.63px;top:1125.56px;font-size:24.5px;line-height:24.5px;color:#f1f4f7;transform:scaleX(0.9090);transform-origin:left center;">172.31.24.120</div>
<div class="t m" style="top:1128.21px;font-size:23.6px;line-height:23.6px;color:#f1f4f7;letter-spacing:-0.310px;right:1831.91px;text-align:right;">352</div>
<div class="b" style="left:930.00px;top:1218.00px;width:816.00px;height:2.00px;background:#243759;"></div>
<div class="t" style="left:944.08px;top:1179.56px;font-size:24.5px;line-height:24.5px;color:#8aa0ba;transform:scaleX(1.1037);transform-origin:left center;">3</div>
<div class="t" style="left:1004.57px;top:1179.56px;font-size:24.5px;line-height:24.5px;color:#f1f4f7;transform:scaleX(0.9437);transform-origin:left center;">172.31.38.245</div>
<div class="t m" style="top:1182.21px;font-size:23.6px;line-height:23.6px;color:#f1f4f7;letter-spacing:-0.310px;right:1831.91px;text-align:right;">336</div>
<div class="b" style="left:930.00px;top:1272.00px;width:816.00px;height:2.00px;background:#243759;"></div>
<div class="t" style="left:944.52px;top:1233.56px;font-size:24.5px;line-height:24.5px;color:#8aa0ba;transform:scaleX(1.0388);transform-origin:left center;">4</div>
<div class="t" style="left:1004.69px;top:1233.56px;font-size:24.5px;line-height:24.5px;color:#f1f4f7;transform:scaleX(0.8737);transform-origin:left center;">172.31.14.154</div>
<div class="t m" style="top:1236.21px;font-size:23.6px;line-height:23.6px;color:#f1f4f7;letter-spacing:-0.310px;right:1831.91px;text-align:right;">333</div>
<div class="b" style="left:930.00px;top:1326.00px;width:816.00px;height:2.00px;background:#243759;"></div>
<div class="t" style="left:944.00px;top:1287.56px;font-size:24.5px;line-height:24.5px;color:#8aa0ba;transform:scaleX(1.1154);transform-origin:left center;">5</div>
<div class="t" style="left:1004.77px;top:1287.56px;font-size:24.5px;line-height:24.5px;color:#f1f4f7;transform:scaleX(0.8353);transform-origin:left center;">172.31.17.134</div>
<div class="t m" style="top:1290.21px;font-size:23.6px;line-height:23.6px;color:#f1f4f7;letter-spacing:-0.310px;right:1831.91px;text-align:right;">314</div>
<div class="b" style="left:930.00px;top:1380.00px;width:816.00px;height:2.00px;background:#243759;"></div>
<div class="t" style="left:943.84px;top:1341.56px;font-size:24.5px;line-height:24.5px;color:#8aa0ba;transform:scaleX(1.1393);transform-origin:left center;">6</div>
<div class="t" style="left:1004.64px;top:1341.56px;font-size:24.5px;line-height:24.5px;color:#f1f4f7;transform:scaleX(0.9039);transform-origin:left center;">172.31.31.76</div>
<div class="t m" style="top:1344.21px;font-size:23.6px;line-height:23.6px;color:#f1f4f7;letter-spacing:-0.310px;right:1831.91px;text-align:right;">298</div>
<div class="b" style="left:930.00px;top:1434.00px;width:816.00px;height:2.00px;background:#243759;"></div>
<div class="t" style="left:943.75px;top:1395.56px;font-size:24.5px;line-height:24.5px;color:#8aa0ba;transform:scaleX(1.1517);transform-origin:left center;">7</div>
<div class="t" style="left:1004.64px;top:1395.56px;font-size:24.5px;line-height:24.5px;color:#f1f4f7;transform:scaleX(0.9058);transform-origin:left center;">172.31.47.247</div>
<div class="t m" style="top:1398.21px;font-size:23.6px;line-height:23.6px;color:#f1f4f7;letter-spacing:-0.310px;right:1831.91px;text-align:right;">296</div>
<div class="b" style="left:930.00px;top:1488.00px;width:816.00px;height:2.00px;background:#243759;"></div>
<div class="t" style="left:944.00px;top:1449.56px;font-size:24.5px;line-height:24.5px;color:#8aa0ba;transform:scaleX(1.1154);transform-origin:left center;">8</div>
<div class="t" style="left:1004.64px;top:1449.56px;font-size:24.5px;line-height:24.5px;color:#f1f4f7;transform:scaleX(0.9032);transform-origin:left center;">172.31.10.60</div>
<div class="t m" style="top:1452.21px;font-size:23.6px;line-height:23.6px;color:#f1f4f7;letter-spacing:-0.310px;right:1831.91px;text-align:right;">295</div>
<div class="b" style="left:930.00px;top:1542.00px;width:816.00px;height:2.00px;background:#243759;"></div>
<div class="t" style="left:943.84px;top:1503.56px;font-size:24.5px;line-height:24.5px;color:#8aa0ba;transform:scaleX(1.1393);transform-origin:left center;">9</div>
<div class="t" style="left:1004.64px;top:1503.56px;font-size:24.5px;line-height:24.5px;color:#f1f4f7;transform:scaleX(0.9016);transform-origin:left center;">172.31.41.64</div>
<div class="t m" style="top:1506.21px;font-size:23.6px;line-height:23.6px;color:#f1f4f7;letter-spacing:-0.310px;right:1831.91px;text-align:right;">295</div>
<div class="b" style="left:930.00px;top:1596.00px;width:816.00px;height:2.00px;background:#243759;"></div>
<div class="t" style="left:938.56px;top:1557.56px;font-size:24.5px;line-height:24.5px;color:#8aa0ba;transform:scaleX(0.9571);transform-origin:left center;">10</div>
<div class="t" style="left:1004.68px;top:1557.56px;font-size:24.5px;line-height:24.5px;color:#f1f4f7;transform:scaleX(0.8828);transform-origin:left center;">172.31.21.31</div>
<div class="t m" style="top:1560.21px;font-size:23.6px;line-height:23.6px;color:#f1f4f7;letter-spacing:-0.310px;right:1831.91px;text-align:right;">292</div>
<div class="b" style="left:930.00px;top:1650.00px;width:816.00px;height:2.00px;background:#243759;"></div>
<div class="t" style="left:940.18px;top:1611.56px;font-size:24.5px;line-height:24.5px;color:#8aa0ba;transform:scaleX(0.8980);transform-origin:left center;">11</div>
<div class="t" style="left:1004.57px;top:1611.56px;font-size:24.5px;line-height:24.5px;color:#f1f4f7;transform:scaleX(0.9420);transform-origin:left center;">172.31.40.89</div>
<div class="t m" style="top:1614.21px;font-size:23.6px;line-height:23.6px;color:#f1f4f7;letter-spacing:-0.310px;right:1831.91px;text-align:right;">292</div>
<div class="b" style="left:930.00px;top:1704.00px;width:816.00px;height:2.00px;background:#243759;"></div>
<div class="t" style="left:938.43px;top:1665.56px;font-size:24.5px;line-height:24.5px;color:#8aa0ba;transform:scaleX(0.9668);transform-origin:left center;">12</div>
<div class="t" style="left:1004.63px;top:1665.56px;font-size:24.5px;line-height:24.5px;color:#f1f4f7;transform:scaleX(0.9097);transform-origin:left center;">172.31.43.143</div>
<div class="t m" style="top:1668.21px;font-size:23.6px;line-height:23.6px;color:#f1f4f7;letter-spacing:-0.310px;right:1831.91px;text-align:right;">292</div>
<div class="b" style="left:930.00px;top:1758.00px;width:816.00px;height:2.00px;background:#243759;"></div>
<div class="t" style="left:938.49px;top:1719.56px;font-size:24.5px;line-height:24.5px;color:#8aa0ba;transform:scaleX(0.9620);transform-origin:left center;">13</div>
<div class="t" style="left:1004.57px;top:1719.56px;font-size:24.5px;line-height:24.5px;color:#f1f4f7;transform:scaleX(0.9414);transform-origin:left center;">172.31.24.204</div>
<div class="t m" style="top:1722.21px;font-size:23.6px;line-height:23.6px;color:#f1f4f7;letter-spacing:-0.310px;right:1831.91px;text-align:right;">290</div>
<div class="b" style="left:930.00px;top:1812.00px;width:816.00px;height:2.00px;background:#243759;"></div>
<div class="t" style="left:938.69px;top:1773.56px;font-size:24.5px;line-height:24.5px;color:#8aa0ba;transform:scaleX(0.9477);transform-origin:left center;">14</div>
<div class="t" style="left:1004.64px;top:1773.56px;font-size:24.5px;line-height:24.5px;color:#f1f4f7;transform:scaleX(0.9051);transform-origin:left center;">172.31.27.238</div>
<div class="t m" style="top:1776.21px;font-size:23.6px;line-height:23.6px;color:#f1f4f7;letter-spacing:-0.310px;right:1831.91px;text-align:right;">288</div>
<div class="b" style="left:930.00px;top:1866.00px;width:816.00px;height:2.00px;background:#243759;"></div>
<div class="t" style="left:938.49px;top:1827.56px;font-size:24.5px;line-height:24.5px;color:#8aa0ba;transform:scaleX(0.9620);transform-origin:left center;">15</div>
<div class="t" style="left:1004.73px;top:1827.56px;font-size:24.5px;line-height:24.5px;color:#f1f4f7;transform:scaleX(0.8565);transform-origin:left center;">172.31.10.101</div>
<div class="t m" style="top:1830.21px;font-size:23.6px;line-height:23.6px;color:#f1f4f7;letter-spacing:-0.310px;right:1831.91px;text-align:right;">287</div>
<div class="b" style="left:930.00px;top:1920.00px;width:816.00px;height:2.00px;background:#243759;"></div>
<div class="t" style="left:938.49px;top:1881.56px;font-size:24.5px;line-height:24.5px;color:#8aa0ba;transform:scaleX(0.9620);transform-origin:left center;">16</div>
<div class="t" style="left:1004.57px;top:1881.56px;font-size:24.5px;line-height:24.5px;color:#f1f4f7;transform:scaleX(0.9420);transform-origin:left center;">172.31.6.209</div>
<div class="t m" style="top:1884.21px;font-size:23.6px;line-height:23.6px;color:#f1f4f7;letter-spacing:-0.310px;right:1831.91px;text-align:right;">284</div>
<div class="b" style="left:930.00px;top:1974.00px;width:816.00px;height:2.00px;background:#243759;"></div>
<div class="t" style="left:938.43px;top:1935.56px;font-size:24.5px;line-height:24.5px;color:#8aa0ba;transform:scaleX(0.9668);transform-origin:left center;">17</div>
<div class="t" style="left:1004.69px;top:1935.56px;font-size:24.5px;line-height:24.5px;color:#f1f4f7;transform:scaleX(0.8758);transform-origin:left center;">172.31.14.198</div>
<div class="t m" style="top:1938.21px;font-size:23.6px;line-height:23.6px;color:#f1f4f7;letter-spacing:-0.310px;right:1831.91px;text-align:right;">280</div>
<div class="b" style="left:930.00px;top:2028.00px;width:816.00px;height:2.00px;background:#243759;"></div>
<div class="t" style="left:938.49px;top:1989.56px;font-size:24.5px;line-height:24.5px;color:#8aa0ba;transform:scaleX(0.9620);transform-origin:left center;">18</div>
<div class="t" style="left:1004.69px;top:1989.56px;font-size:24.5px;line-height:24.5px;color:#f1f4f7;transform:scaleX(0.8758);transform-origin:left center;">172.31.15.143</div>
<div class="t m" style="top:1992.21px;font-size:23.6px;line-height:23.6px;color:#f1f4f7;letter-spacing:-0.310px;right:1831.91px;text-align:right;">279</div>
<div class="b" style="left:930.00px;top:2082.00px;width:816.00px;height:2.00px;background:#243759;"></div>
<div class="t" style="left:938.43px;top:2043.56px;font-size:24.5px;line-height:24.5px;color:#8aa0ba;transform:scaleX(0.9668);transform-origin:left center;">19</div>
<div class="t" style="left:1004.63px;top:2043.56px;font-size:24.5px;line-height:24.5px;color:#f1f4f7;transform:scaleX(0.9076);transform-origin:left center;">172.31.34.184</div>
<div class="t m" style="top:2046.21px;font-size:23.6px;line-height:23.6px;color:#f1f4f7;letter-spacing:-0.310px;right:1831.91px;text-align:right;">279</div>
<div class="b" style="left:930.00px;top:2136.00px;width:816.00px;height:2.00px;background:#243759;"></div>
<div class="t" style="left:937.07px;top:2097.56px;font-size:24.5px;line-height:24.5px;color:#8aa0ba;transform:scaleX(1.0660);transform-origin:left center;">20</div>
<div class="t" style="left:1004.58px;top:2097.56px;font-size:24.5px;line-height:24.5px;color:#f1f4f7;transform:scaleX(0.9387);transform-origin:left center;">172.31.32.24</div>
<div class="t m" style="top:2100.21px;font-size:23.6px;line-height:23.6px;color:#f1f4f7;letter-spacing:-0.310px;right:1831.91px;text-align:right;">278</div>
<div class="b" style="left:1786.00px;top:930.00px;width:868.00px;height:1274.00px;background:#181e31;"></div>
<div class="t" style="top:954.18px;font-size:24px;line-height:24px;color:#9db4cd;letter-spacing:0.247px;left:1810.60px;-webkit-text-stroke:0.35px #9db4cd;">Possible Vertical Port Scan Attack - Allowed</div>
<div class="tbl" style="left:1810.00px;top:1002.00px;width:820.00px;height:1178.00px;"></div>
<div class="b" style="left:1812.00px;top:1004.00px;width:816.00px;height:52.00px;background:#1b2540;"></div>
<div class="b" style="left:1812.00px;top:1056.00px;width:816.00px;height:2.00px;background:#243759;"></div>
<div class="b" style="left:2269.60px;top:1011.50px;width:2.00px;height:36.00px;background:#3a5273;"></div>
<div class="t" style="top:1017.88px;font-size:24px;line-height:24px;color:#92abc6;letter-spacing:0.230px;left:1888.20px;">dest_ip</div>
<div class="t" style="top:1017.88px;font-size:24px;line-height:24px;color:#92abc6;right:950.70px;text-align:right;">UniqueDestinationPorts</div>
<div class="b" style="left:1812.00px;top:1110.00px;width:816.00px;height:2.00px;background:#243759;"></div>
<div class="t" style="left:1827.42px;top:1071.56px;font-size:24.5px;line-height:24.5px;color:#8aa0ba;transform:scaleX(0.9064);transform-origin:left center;">1</div>
<div class="t" style="left:1886.48px;top:1071.56px;font-size:24.5px;line-height:24.5px;color:#f1f4f7;transform:scaleX(0.9387);transform-origin:left center;">172.31.32.24</div>
<div class="t m" style="top:1074.21px;font-size:23.6px;line-height:23.6px;color:#f1f4f7;letter-spacing:-0.310px;right:950.01px;text-align:right;">637</div>
<div class="b" style="left:1812.00px;top:1164.00px;width:816.00px;height:2.00px;background:#243759;"></div>
<div class="t" style="left:1825.75px;top:1125.56px;font-size:24.5px;line-height:24.5px;color:#8aa0ba;transform:scaleX(1.1517);transform-origin:left center;">2</div>
<div class="t" style="left:1886.53px;top:1125.56px;font-size:24.5px;line-height:24.5px;color:#f1f4f7;transform:scaleX(0.9090);transform-origin:left center;">172.31.24.120</div>
<div class="t m" style="top:1128.21px;font-size:23.6px;line-height:23.6px;color:#f1f4f7;letter-spacing:-0.310px;right:950.01px;text-align:right;">566</div>
<div class="b" style="left:1812.00px;top:1218.00px;width:816.00px;height:2.00px;background:#243759;"></div>
<div class="t" style="left:1826.08px;top:1179.56px;font-size:24.5px;line-height:24.5px;color:#8aa0ba;transform:scaleX(1.1037);transform-origin:left center;">3</div>
<div class="t" style="left:1886.54px;top:1179.56px;font-size:24.5px;line-height:24.5px;color:#f1f4f7;transform:scaleX(0.9032);transform-origin:left center;">172.31.10.60</div>
<div class="t m" style="top:1182.21px;font-size:23.6px;line-height:23.6px;color:#f1f4f7;letter-spacing:-0.310px;right:950.01px;text-align:right;">245</div>
<div class="b" style="left:1812.00px;top:1272.00px;width:816.00px;height:2.00px;background:#243759;"></div>
<div class="t" style="left:1826.52px;top:1233.56px;font-size:24.5px;line-height:24.5px;color:#8aa0ba;transform:scaleX(1.0388);transform-origin:left center;">4</div>
<div class="t" style="left:1886.58px;top:1233.56px;font-size:24.5px;line-height:24.5px;color:#f1f4f7;transform:scaleX(0.8828);transform-origin:left center;">172.31.21.31</div>
<div class="t m" style="top:1236.21px;font-size:23.6px;line-height:23.6px;color:#f1f4f7;letter-spacing:-0.310px;right:950.01px;text-align:right;">240</div>
<div class="b" style="left:1812.00px;top:1326.00px;width:816.00px;height:2.00px;background:#243759;"></div>
<div class="t" style="left:1826.00px;top:1287.56px;font-size:24.5px;line-height:24.5px;color:#8aa0ba;transform:scaleX(1.1154);transform-origin:left center;">5</div>
<div class="t" style="left:1886.59px;top:1287.56px;font-size:24.5px;line-height:24.5px;color:#f1f4f7;transform:scaleX(0.8758);transform-origin:left center;">172.31.15.185</div>
<div class="t m" style="top:1290.21px;font-size:23.6px;line-height:23.6px;color:#f1f4f7;letter-spacing:-0.310px;right:950.01px;text-align:right;">237</div>
<div class="b" style="left:1812.00px;top:1380.00px;width:816.00px;height:2.00px;background:#243759;"></div>
<div class="t" style="left:1825.84px;top:1341.56px;font-size:24.5px;line-height:24.5px;color:#8aa0ba;transform:scaleX(1.1393);transform-origin:left center;">6</div>
<div class="t" style="left:1886.50px;top:1341.56px;font-size:24.5px;line-height:24.5px;color:#f1f4f7;transform:scaleX(0.9244);transform-origin:left center;">172.31.25.241</div>
<div class="t m" style="top:1344.21px;font-size:23.6px;line-height:23.6px;color:#f1f4f7;letter-spacing:-0.310px;right:950.01px;text-align:right;">237</div>
<div class="b" style="left:1812.00px;top:1434.00px;width:816.00px;height:2.00px;background:#243759;"></div>
<div class="t" style="left:1825.75px;top:1395.56px;font-size:24.5px;line-height:24.5px;color:#8aa0ba;transform:scaleX(1.1517);transform-origin:left center;">7</div>
<div class="t" style="left:1886.47px;top:1395.56px;font-size:24.5px;line-height:24.5px;color:#f1f4f7;transform:scaleX(0.9420);transform-origin:left center;">172.31.40.89</div>
<div class="t m" style="top:1398.21px;font-size:23.6px;line-height:23.6px;color:#f1f4f7;letter-spacing:-0.310px;right:950.01px;text-align:right;">236</div>
<div class="b" style="left:1812.00px;top:1488.00px;width:816.00px;height:2.00px;background:#243759;"></div>
<div class="t" style="left:1826.00px;top:1449.56px;font-size:24.5px;line-height:24.5px;color:#8aa0ba;transform:scaleX(1.1154);transform-origin:left center;">8</div>
<div class="t" style="left:1886.47px;top:1449.56px;font-size:24.5px;line-height:24.5px;color:#f1f4f7;transform:scaleX(0.9420);transform-origin:left center;">172.31.30.32</div>
<div class="t m" style="top:1452.21px;font-size:23.6px;line-height:23.6px;color:#f1f4f7;letter-spacing:-0.310px;right:950.01px;text-align:right;">226</div>
<div class="b" style="left:1812.00px;top:1542.00px;width:816.00px;height:2.00px;background:#243759;"></div>
<div class="t" style="left:1825.84px;top:1503.56px;font-size:24.5px;line-height:24.5px;color:#8aa0ba;transform:scaleX(1.1393);transform-origin:left center;">9</div>
<div class="t" style="left:1886.54px;top:1503.56px;font-size:24.5px;line-height:24.5px;color:#f1f4f7;transform:scaleX(0.9016);transform-origin:left center;">172.31.41.64</div>
<div class="t m" style="top:1506.21px;font-size:23.6px;line-height:23.6px;color:#f1f4f7;letter-spacing:-0.310px;right:950.01px;text-align:right;">226</div>
<div class="b" style="left:1812.00px;top:1596.00px;width:816.00px;height:2.00px;background:#243759;"></div>
<div class="t" style="left:1820.56px;top:1557.56px;font-size:24.5px;line-height:24.5px;color:#8aa0ba;transform:scaleX(0.9571);transform-origin:left center;">10</div>
<div class="t" style="left:1886.53px;top:1557.56px;font-size:24.5px;line-height:24.5px;color:#f1f4f7;transform:scaleX(0.9076);transform-origin:left center;">172.31.34.184</div>
<div class="t m" style="top:1560.21px;font-size:23.6px;line-height:23.6px;color:#f1f4f7;letter-spacing:-0.310px;right:950.01px;text-align:right;">224</div>
<div class="b" style="left:1812.00px;top:1650.00px;width:816.00px;height:2.00px;background:#243759;"></div>
<div class="t" style="left:1822.18px;top:1611.56px;font-size:24.5px;line-height:24.5px;color:#8aa0ba;transform:scaleX(0.8980);transform-origin:left center;">11</div>
<div class="t" style="left:1886.67px;top:1611.56px;font-size:24.5px;line-height:24.5px;color:#f1f4f7;transform:scaleX(0.8353);transform-origin:left center;">172.31.17.134</div>
<div class="t m" style="top:1614.21px;font-size:23.6px;line-height:23.6px;color:#f1f4f7;letter-spacing:-0.310px;right:950.01px;text-align:right;">221</div>
<div class="b" style="left:1812.00px;top:1704.00px;width:816.00px;height:2.00px;background:#243759;"></div>
<div class="t" style="left:1820.43px;top:1665.56px;font-size:24.5px;line-height:24.5px;color:#8aa0ba;transform:scaleX(0.9668);transform-origin:left center;">12</div>
<div class="t" style="left:1886.54px;top:1665.56px;font-size:24.5px;line-height:24.5px;color:#f1f4f7;transform:scaleX(0.9051);transform-origin:left center;">172.31.27.238</div>
<div class="t m" style="top:1668.21px;font-size:23.6px;line-height:23.6px;color:#f1f4f7;letter-spacing:-0.310px;right:950.01px;text-align:right;">187</div>
<div class="b" style="left:1812.00px;top:1758.00px;width:816.00px;height:2.00px;background:#243759;"></div>
<div class="t" style="left:1820.49px;top:1719.56px;font-size:24.5px;line-height:24.5px;color:#8aa0ba;transform:scaleX(0.9620);transform-origin:left center;">13</div>
<div class="t" style="left:1886.55px;top:1719.56px;font-size:24.5px;line-height:24.5px;color:#f1f4f7;transform:scaleX(0.9005);transform-origin:left center;">172.31.40.118</div>
<div class="t m" style="top:1722.21px;font-size:23.6px;line-height:23.6px;color:#f1f4f7;letter-spacing:-0.310px;right:950.01px;text-align:right;">183</div>
<div class="b" style="left:1812.00px;top:1812.00px;width:816.00px;height:2.00px;background:#243759;"></div>
<div class="t" style="left:1820.69px;top:1773.56px;font-size:24.5px;line-height:24.5px;color:#8aa0ba;transform:scaleX(0.9477);transform-origin:left center;">14</div>
<div class="t" style="left:1886.59px;top:1773.56px;font-size:24.5px;line-height:24.5px;color:#f1f4f7;transform:scaleX(0.8758);transform-origin:left center;">172.31.19.185</div>
<div class="t m" style="top:1776.21px;font-size:23.6px;line-height:23.6px;color:#f1f4f7;letter-spacing:-0.310px;right:950.01px;text-align:right;">168</div>
<div class="b" style="left:1812.00px;top:1866.00px;width:816.00px;height:2.00px;background:#243759;"></div>
<div class="t" style="left:1820.49px;top:1827.56px;font-size:24.5px;line-height:24.5px;color:#8aa0ba;transform:scaleX(0.9620);transform-origin:left center;">15</div>
<div class="t" style="left:1886.52px;top:1827.56px;font-size:24.5px;line-height:24.5px;color:#f1f4f7;transform:scaleX(0.9139);transform-origin:left center;">191.96.224.140</div>
<div class="t m" style="top:1830.21px;font-size:23.6px;line-height:23.6px;color:#f1f4f7;letter-spacing:-0.310px;right:950.01px;text-align:right;">108</div>
<div class="b" style="left:1812.00px;top:1920.00px;width:816.00px;height:2.00px;background:#243759;"></div>
<div class="t" style="left:1820.49px;top:1881.56px;font-size:24.5px;line-height:24.5px;color:#8aa0ba;transform:scaleX(0.9620);transform-origin:left center;">16</div>
<div class="t" style="left:1887.33px;top:1881.56px;font-size:24.5px;line-height:24.5px;color:#f1f4f7;transform:scaleX(0.8856);transform-origin:left center;">82.157.143.20</div>
<div class="t m" style="top:1884.21px;font-size:23.6px;line-height:23.6px;color:#f1f4f7;letter-spacing:-0.310px;right:950.01px;text-align:right;">82</div>
<div class="b" style="left:1812.00px;top:1974.00px;width:816.00px;height:2.00px;background:#243759;"></div>
<div class="t" style="left:1820.43px;top:1935.56px;font-size:24.5px;line-height:24.5px;color:#8aa0ba;transform:scaleX(0.9668);transform-origin:left center;">17</div>
<div class="t" style="left:1886.62px;top:1935.56px;font-size:24.5px;line-height:24.5px;color:#f1f4f7;transform:scaleX(0.8614);transform-origin:left center;">179.60.147.161</div>
<div class="t m" style="top:1938.21px;font-size:23.6px;line-height:23.6px;color:#f1f4f7;letter-spacing:-0.310px;right:950.01px;text-align:right;">62</div>
<div class="b" style="left:1812.00px;top:2028.00px;width:816.00px;height:2.00px;background:#243759;"></div>
<div class="t" style="left:1820.49px;top:1989.56px;font-size:24.5px;line-height:24.5px;color:#8aa0ba;transform:scaleX(0.9620);transform-origin:left center;">18</div>
<div class="t" style="left:1887.19px;top:1989.56px;font-size:24.5px;line-height:24.5px;color:#f1f4f7;transform:scaleX(0.9160);transform-origin:left center;">93.157.63.28</div>
<div class="t m" style="top:1992.21px;font-size:23.6px;line-height:23.6px;color:#f1f4f7;letter-spacing:-0.310px;right:950.01px;text-align:right;">44</div>
<div class="b" style="left:1812.00px;top:2082.00px;width:816.00px;height:2.00px;background:#243759;"></div>
<div class="t" style="left:1820.43px;top:2043.56px;font-size:24.5px;line-height:24.5px;color:#8aa0ba;transform:scaleX(0.9668);transform-origin:left center;">19</div>
<div class="t" style="left:1886.54px;top:2043.56px;font-size:24.5px;line-height:24.5px;color:#f1f4f7;transform:scaleX(0.9051);transform-origin:left center;">167.86.96.195</div>
<div class="t m" style="top:2046.21px;font-size:23.6px;line-height:23.6px;color:#f1f4f7;letter-spacing:-0.310px;right:950.01px;text-align:right;">42</div>
<div class="b" style="left:1812.00px;top:2136.00px;width:816.00px;height:2.00px;background:#243759;"></div>
<div class="t" style="left:1819.07px;top:2097.56px;font-size:24.5px;line-height:24.5px;color:#8aa0ba;transform:scaleX(1.0660);transform-origin:left center;">20</div>
<div class="t" style="left:1886.52px;top:2097.56px;font-size:24.5px;line-height:24.5px;color:#f1f4f7;transform:scaleX(0.9152);transform-origin:left center;">120.236.14.149</div>
<div class="t m" style="top:2100.21px;font-size:23.6px;line-height:23.6px;color:#f1f4f7;letter-spacing:-0.310px;right:950.01px;text-align:right;">41</div>
<div class="b" style="left:2670.00px;top:930.00px;width:868.00px;height:1274.00px;background:#181e31;"></div>
<div class="t" style="top:954.18px;font-size:24px;line-height:24px;color:#9db4cd;letter-spacing:0.261px;left:2694.60px;-webkit-text-stroke:0.35px #9db4cd;">Possible Horizontal Port Scan Attack - Allowed</div>
<div class="tbl" style="left:2694.00px;top:1002.00px;width:820.00px;height:1178.00px;"></div>
<div class="b" style="left:2696.00px;top:1004.00px;width:816.00px;height:52.00px;background:#1b2540;"></div>
<div class="b" style="left:2696.00px;top:1056.00px;width:816.00px;height:2.00px;background:#243759;"></div>
<div class="b" style="left:3153.80px;top:1011.50px;width:2.00px;height:36.00px;background:#3a5273;"></div>
<div class="t" style="top:1017.88px;font-size:24px;line-height:24px;color:#92abc6;letter-spacing:0.493px;left:2760.30px;">dest_port</div>
<div class="t" style="top:1017.88px;font-size:24px;line-height:24px;color:#92abc6;letter-spacing:-0.031px;right:67.03px;text-align:right;">UniqueDestinationHosts</div>
<div class="b" style="left:2696.00px;top:1110.00px;width:816.00px;height:2.00px;background:#243759;"></div>
<div class="t" style="left:2705.62px;top:1071.56px;font-size:24.5px;line-height:24.5px;color:#8aa0ba;transform:scaleX(0.9064);transform-origin:left center;">1</div>
<div class="t" style="left:2759.79px;top:1071.56px;font-size:24.5px;line-height:24.5px;color:#f1f4f7;transform:scaleX(1.0315);transform-origin:left center;">443</div>
<div class="t m" style="top:1074.21px;font-size:23.6px;line-height:23.6px;color:#f1f4f7;letter-spacing:-0.310px;right:66.31px;text-align:right;">213</div>
<div class="b" style="left:2696.00px;top:1164.00px;width:816.00px;height:2.00px;background:#243759;"></div>
<div class="t" style="left:2703.95px;top:1125.56px;font-size:24.5px;line-height:24.5px;color:#8aa0ba;transform:scaleX(1.1517);transform-origin:left center;">2</div>
<div class="t" style="left:2759.36px;top:1125.56px;font-size:24.5px;line-height:24.5px;color:#f1f4f7;transform:scaleX(1.0924);transform-origin:left center;">0</div>
<div class="t m" style="top:1128.21px;font-size:23.6px;line-height:23.6px;color:#f1f4f7;letter-spacing:-0.310px;right:66.31px;text-align:right;">77</div>
<div class="b" style="left:2696.00px;top:1218.00px;width:816.00px;height:2.00px;background:#243759;"></div>
<div class="t" style="left:2704.28px;top:1179.56px;font-size:24.5px;line-height:24.5px;color:#8aa0ba;transform:scaleX(1.1037);transform-origin:left center;">3</div>
<div class="t" style="left:2758.50px;top:1179.56px;font-size:24.5px;line-height:24.5px;color:#f1f4f7;transform:scaleX(0.9806);transform-origin:left center;">123</div>
<div class="t m" style="top:1182.21px;font-size:23.6px;line-height:23.6px;color:#f1f4f7;letter-spacing:-0.310px;right:66.31px;text-align:right;">31</div>
<div class="b" style="left:2696.00px;top:1272.00px;width:816.00px;height:2.00px;background:#243759;"></div>
<div class="t" style="left:2704.72px;top:1233.56px;font-size:24.5px;line-height:24.5px;color:#8aa0ba;transform:scaleX(1.0388);transform-origin:left center;">4</div>
<div class="t" style="left:2758.98px;top:1233.56px;font-size:24.5px;line-height:24.5px;color:#f1f4f7;transform:scaleX(1.0765);transform-origin:left center;">22</div>
<div class="t m" style="top:1236.21px;font-size:23.6px;line-height:23.6px;color:#f1f4f7;letter-spacing:-0.310px;right:66.31px;text-align:right;">28</div>
<div class="b" style="left:2696.00px;top:1326.00px;width:816.00px;height:2.00px;background:#243759;"></div>
<div class="t" style="left:2704.20px;top:1287.56px;font-size:24.5px;line-height:24.5px;color:#8aa0ba;transform:scaleX(1.1154);transform-origin:left center;">5</div>
<div class="t" style="left:2759.27px;top:1287.56px;font-size:24.5px;line-height:24.5px;color:#f1f4f7;transform:scaleX(1.0557);transform-origin:left center;">80</div>
<div class="t m" style="top:1290.21px;font-size:23.6px;line-height:23.6px;color:#f1f4f7;letter-spacing:-0.310px;right:66.31px;text-align:right;">28</div>
<div class="b" style="left:2696.00px;top:1380.00px;width:816.00px;height:2.00px;background:#243759;"></div>
<div class="t" style="left:2704.04px;top:1341.56px;font-size:24.5px;line-height:24.5px;color:#8aa0ba;transform:scaleX(1.1393);transform-origin:left center;">6</div>
<div class="t" style="left:2759.10px;top:1341.56px;font-size:24.5px;line-height:24.5px;color:#f1f4f7;transform:scaleX(0.9817);transform-origin:left center;">61000</div>
<div class="t m" style="top:1344.21px;font-size:23.6px;line-height:23.6px;color:#f1f4f7;letter-spacing:-0.310px;right:66.31px;text-align:right;">21</div>
<div class="b" style="left:2696.00px;top:1434.00px;width:816.00px;height:2.00px;background:#243759;"></div>
<div class="t" style="left:2703.95px;top:1395.56px;font-size:24.5px;line-height:24.5px;color:#8aa0ba;transform:scaleX(1.1517);transform-origin:left center;">7</div>
<div class="t" style="left:2759.29px;top:1395.56px;font-size:24.5px;line-height:24.5px;color:#f1f4f7;transform:scaleX(1.0318);transform-origin:left center;">8080</div>
<div class="t m" style="top:1398.21px;font-size:23.6px;line-height:23.6px;color:#f1f4f7;letter-spacing:-0.310px;right:66.31px;text-align:right;">8</div>
<div class="b" style="left:8.00px;top:2204.00px;width:3546.00px;height:21.50px;background:linear-gradient(to bottom, #111727, #0c1220);"></div>
</div></body></html>
